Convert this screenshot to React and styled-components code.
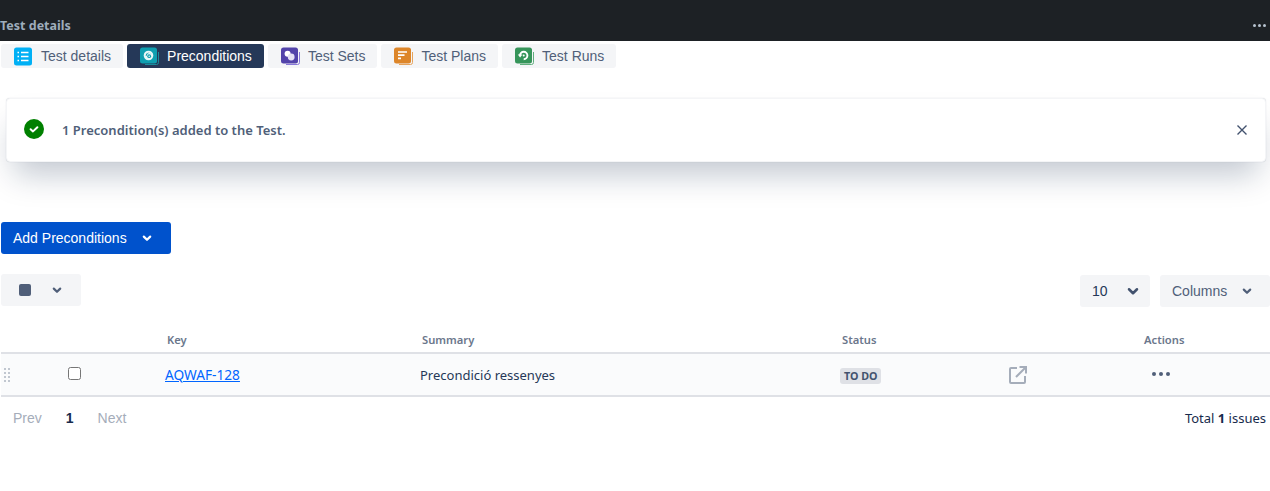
import React from 'react';
import styled, { createGlobalStyle } from 'styled-components';

const GlobalStyle = createGlobalStyle`
    html, body {
        margin: 0;
        padding: 0;
        background: #fff;
        font-family: "Liberation Sans", Arial, sans-serif;
    }
`

const Chevron = ({ size = 16, color = 'currentColor', weight = 2.2 }) => (
    <svg width={size} height={size} viewBox="0 0 16 16" fill="none">
        <path d="M4.8 6.6 L8 9.8 L11.2 6.6" stroke={color} strokeWidth={weight} strokeLinecap="round" strokeLinejoin="round" />
    </svg>
)

const TabIcon = ({ color, back, children }) => (
    <svg width="21" height="19" viewBox="1 0 21 19" fill="none">
        <path d="M19.5 5 V15.5 A2 2 0 0 1 17.5 17.5 H6" stroke={back} strokeWidth="1" />
        <rect x="1" y="0.5" width="17" height="16" rx="2.5" fill={color} />
        {children}
    </svg>
)

const tabs = [
    {
        label: 'Test details',
        icon: (
            <svg width="21" height="19" viewBox="1 0 21 19" fill="none">
                <rect x="1" y="0.5" width="18" height="18" rx="2.5" fill="#00b0f5" />
                <path d="M8 5.5 H15.5 M8 9.5 H15.5 M8 13.5 H15.5 M4.5 5.5 H6 M4.5 9.5 H6 M4.5 13.5 H6" stroke="#fff" strokeWidth="1.6" />
            </svg>
        ),
    },
    {
        label: 'Preconditions',
        active: true,
        icon: (
            <TabIcon color="#0f9fb0" back="#1a8b9c">
                <circle cx="9.5" cy="8.5" r="4.8" fill="#e8f7f8" />
                <path d="M6.6 8.9 A3.2 3.2 0 0 1 12.6 7.4 A2.4 2.4 0 0 0 8 8.4 Z" fill="#0f9fb0" />
                <circle cx="10.2" cy="9.2" r="1.9" fill="#0f9fb0" />
                <circle cx="10.2" cy="9.2" r="0.8" fill="#e8f7f8" />
            </TabIcon>
        ),
    },
    {
        label: 'Test Sets',
        icon: (
            <TabIcon color="#5243aa" back="#8777d9">
                <circle cx="7.6" cy="6.8" r="3" fill="#fff" />
                <circle cx="11.2" cy="10" r="3.4" fill="#e4e1f5" />
            </TabIcon>
        ),
    },
    {
        label: 'Test Plans',
        icon: (
            <TabIcon color="#dd862a" back="#e6a35c">
                <path d="M5 5 H14 M5 8.2 H11.5 M5 11.4 H8" stroke="#fff" strokeWidth="1.7" />
            </TabIcon>
        ),
    },
    {
        label: 'Test Runs',
        icon: (
            <TabIcon color="#36955a" back="#5fae7d">
                <path d="M6 8.5 A3.7 3.7 0 1 1 9.7 12.2" stroke="#fff" strokeWidth="1.9" />
                <path d="M3.8 7.4 L8.4 7.4 L6.1 10.4 Z" fill="#fff" />
                <circle cx="9.7" cy="8.5" r="1" fill="#fff" />
            </TabIcon>
        ),
    },
]

export default () => {

    return (
        <Page>
            <GlobalStyle />
            <TopBar>
                <TopBarTitle>Test details</TopBarTitle>
                <TopBarDots>
                    <i /><i /><i />
                </TopBarDots>
            </TopBar>

            <TabRow>
                {tabs.map(tab => (
                    <Tab key={tab.label} $active={tab.active}>
                        {tab.icon}
                        <span>{tab.label}</span>
                    </Tab>
                ))}
            </TabRow>

            <Notice>
                <NoticeCheck>
                    <svg width="20" height="20" viewBox="0 0 20 20" fill="none">
                        <circle cx="10" cy="10" r="10" fill="#008000" />
                        <path d="M6.6 10.2 L9 12.4 L13.4 8.2" stroke="#fff" strokeWidth="2" strokeLinecap="round" strokeLinejoin="round" />
                    </svg>
                </NoticeCheck>
                <NoticeText>1 Precondition(s) added to the Test.</NoticeText>
                <NoticeClose>
                    <svg width="12" height="12" viewBox="0 0 12 12" fill="none">
                        <path d="M1.5 1.5 L10.5 10.5 M10.5 1.5 L1.5 10.5" stroke="#42526e" strokeWidth="1.4" />
                    </svg>
                </NoticeClose>
            </Notice>

            <AddButton>
                Add Preconditions
                <Chevron color="#fff" />
            </AddButton>

            <Toolbar>
                <SelectAll>
                    <SquareMark />
                    <Chevron color="#505f79" />
                </SelectAll>
                <ToolbarRight>
                    <PageSize>
                        10
                        <Chevron size={20} color="#42526e" weight={2} />
                    </PageSize>
                    <ColumnsButton>
                        Columns
                        <Chevron color="#505f79" />
                    </ColumnsButton>
                </ToolbarRight>
            </Toolbar>

            <TableHead>
                <span />
                <span />
                <HeadCell>Key</HeadCell>
                <HeadCell>Summary</HeadCell>
                <HeadCell>Status</HeadCell>
                <span />
                <HeadCell>Actions</HeadCell>
            </TableHead>

            <TableRow>
                <DragHandle>
                    <i /><i /><i /><i /><i /><i /><i /><i />
                </DragHandle>
                <CheckCell>
                    <input type="checkbox" />
                </CheckCell>
                <IssueKey href="#">AQWAF-128</IssueKey>
                <BodyCell>Precondició ressenyes</BodyCell>
                <StatusCell>
                    <StatusBadge>TO DO</StatusBadge>
                </StatusCell>
                <OpenIcon>
                    <svg width="18" height="18" viewBox="0 0 18 18" fill="none">
                        <path d="M8 2 H2 A1 1 0 0 0 1 3 V16 A1 1 0 0 0 2 17 H15 A1 1 0 0 0 16 16 V10" stroke="#a5adba" strokeWidth="2" />
                        <path d="M7 11 L16.8 1.2 M10.5 1 H17 V7.5" stroke="#a5adba" strokeWidth="2" />
                    </svg>
                </OpenIcon>
                <RowDots>
                    <i /><i /><i />
                </RowDots>
            </TableRow>

            <Footer>
                <Pager>
                    <PagerLink>Prev</PagerLink>
                    <PagerCurrent>1</PagerCurrent>
                    <PagerLink>Next</PagerLink>
                </Pager>
                <Total>Total <b>1</b> issues</Total>
            </Footer>
        </Page>
    )
}

const Page = styled.div`
    width: 1270px;
    height: 491px;
    overflow: hidden;
    background: #fff;
`

const TopBar = styled.div`
    height: 41px;
    background: #1d2125;
    display: flex;
    align-items: flex-end;
    justify-content: space-between;
    padding-bottom: 7px;
    box-sizing: border-box;
`

const TopBarTitle = styled.div`
    font-family: "Noto Sans", sans-serif;
    font-size: 12.5px;
    font-weight: 700;
    line-height: 17px;
    color: #9fadbc;
`

const TopBarDots = styled.div`
    display: flex;
    gap: 2px;
    padding: 0 4px 7px 0;

    &> i{
        width: 3px;
        height: 3px;
        border-radius: 50%;
        background: #b6c2cf;
    }
`

const TabRow = styled.div`
    display: flex;
    gap: 4px;
    padding: 3px 0 0 1px;
`

const Tab = styled.div`
    height: 24px;
    display: flex;
    align-items: center;
    gap: 6px;
    padding: 0 12px 0 13px;
    border-radius: 3px;
    font-size: 14px;
    background: ${props => props.$active ? '#253858' : '#f4f5f7'};
    color: ${props => props.$active ? '#fff' : '#505f79'};

    &> svg{
        flex: none;
        margin-top: 1px;
    }
`

const Notice = styled.div`
    margin: 30px 4px 0 6px;
    height: 64px;
    box-sizing: border-box;
    display: flex;
    align-items: center;
    padding: 0 17px;
    border-radius: 4px;
    background: #fff;
    border: 1px solid #f4f5f7;
    box-shadow: 0 20px 32px -8px rgba(9, 30, 66, 0.25), 0 0 1px rgba(9, 30, 66, 0.2);
`

const NoticeCheck = styled.div`
    display: flex;
    margin-top: -2px;
`

const NoticeText = styled.div`
    flex: 1;
    margin-left: 18px;
    font-family: "Noto Sans", sans-serif;
    font-size: 13px;
    font-weight: 600;
    color: #505f79;
`

const NoticeClose = styled.div`
    display: flex;
`

const AddButton = styled.div`
    margin: 60px 0 0 1px;
    width: 170px;
    height: 32px;
    box-sizing: border-box;
    display: flex;
    align-items: center;
    gap: 12px;
    padding-left: 12px;
    border-radius: 3px;
    background: #0052cc;
    color: #fff;
    font-size: 14px;
`

const Toolbar = styled.div`
    display: flex;
    justify-content: space-between;
    align-items: flex-start;
    margin: 20px 0 0 1px;
`

const ToolbarRight = styled.div`
    display: flex;
    gap: 10px;
    padding-top: 1px;
`

const SelectAll = styled.div`
    width: 80px;
    height: 32px;
    box-sizing: border-box;
    display: flex;
    align-items: center;
    gap: 18px;
    padding-left: 18px;
    border-radius: 3px;
    background: #f4f5f7;
`

const SquareMark = styled.div`
    width: 12px;
    height: 12px;
    border-radius: 2px;
    background: #505f79;
`

const PageSize = styled.div`
    width: 70px;
    height: 32px;
    box-sizing: border-box;
    display: flex;
    align-items: center;
    gap: 15px;
    padding-left: 12px;
    border-radius: 3px;
    background: #f4f5f7;
    color: #253858;
    font-size: 14px;
`

const ColumnsButton = styled.div`
    width: 110px;
    height: 32px;
    box-sizing: border-box;
    display: flex;
    align-items: center;
    gap: 12px;
    padding-left: 12px;
    border-radius: 3px;
    background: #f4f5f7;
    color: #505f79;
    font-size: 14px;
`

const columns = '60px 104px 255px 420px 169px 133px 1fr'

const TableHead = styled.div`
    display: grid;
    grid-template-columns: ${columns};
    margin: 23px 0 0 1px;
    height: 24px;
    box-sizing: border-box;
    border-bottom: 2px solid #dfe1e6;
`

const HeadCell = styled.div`
    padding-left: 2px;
    font-family: "Noto Sans", sans-serif;
    font-size: 11.2px;
    font-weight: 600;
    line-height: 20px;
    color: #6b778c;
`

const TableRow = styled.div`
    display: grid;
    grid-template-columns: ${columns};
    align-items: center;
    margin-left: 1px;
    height: 43px;
    box-sizing: border-box;
    padding-top: 1px;
    background: #fafbfc;
    border-bottom: 2px solid #dfe1e6;
    font-family: "Noto Sans", sans-serif;
    font-size: 13px;
`

const DragHandle = styled.div`
    display: grid;
    grid-template-columns: 2px 2px;
    gap: 2px;
    padding-left: 3px;

    &> i{
        height: 2px;
        background: #c1c7d0;
    }
`

const CheckCell = styled.div`
    display: flex;
    padding: 0 0 3px 7px;

    &> input{
        margin: 0;
        width: 13px;
        height: 13px;
    }
`

const IssueKey = styled.a`
    color: #0065ff;
    font-size: 13.7px;
    line-height: 18px;
    margin-top: -1px;
    text-decoration: underline;
`

const BodyCell = styled.div`
    color: #253858;
`

const StatusCell = styled.div`
    display: flex;
    padding-top: 2px;
`

const StatusBadge = styled.span`
    padding: 0 4px;
    border-radius: 3px;
    background: #dfe1e6;
    color: #42526e;
    font-size: 10.7px;
    font-weight: 700;
    line-height: 16px;
`

const OpenIcon = styled.div`
    display: flex;
`

const RowDots = styled.div`
    display: flex;
    gap: 3px;
    padding: 0 0 2px 10px;

    &> i{
        width: 4px;
        height: 4px;
        border-radius: 50%;
        background: #505f79;
    }
`

const Footer = styled.div`
    display: flex;
    justify-content: space-between;
    align-items: center;
    height: 42px;
    padding: 0 4px 0 13px;
`

const Pager = styled.div`
    display: flex;
    align-items: center;
    gap: 24px;
    font-size: 14px;
`

const PagerLink = styled.span`
    color: #a5adba;
`

const PagerCurrent = styled.span`
    font-weight: 700;
    color: #172b4d;
`

const Total = styled.div`
    font-family: "Noto Sans", sans-serif;
    font-size: 13px;
    color: #172b4d;
`
